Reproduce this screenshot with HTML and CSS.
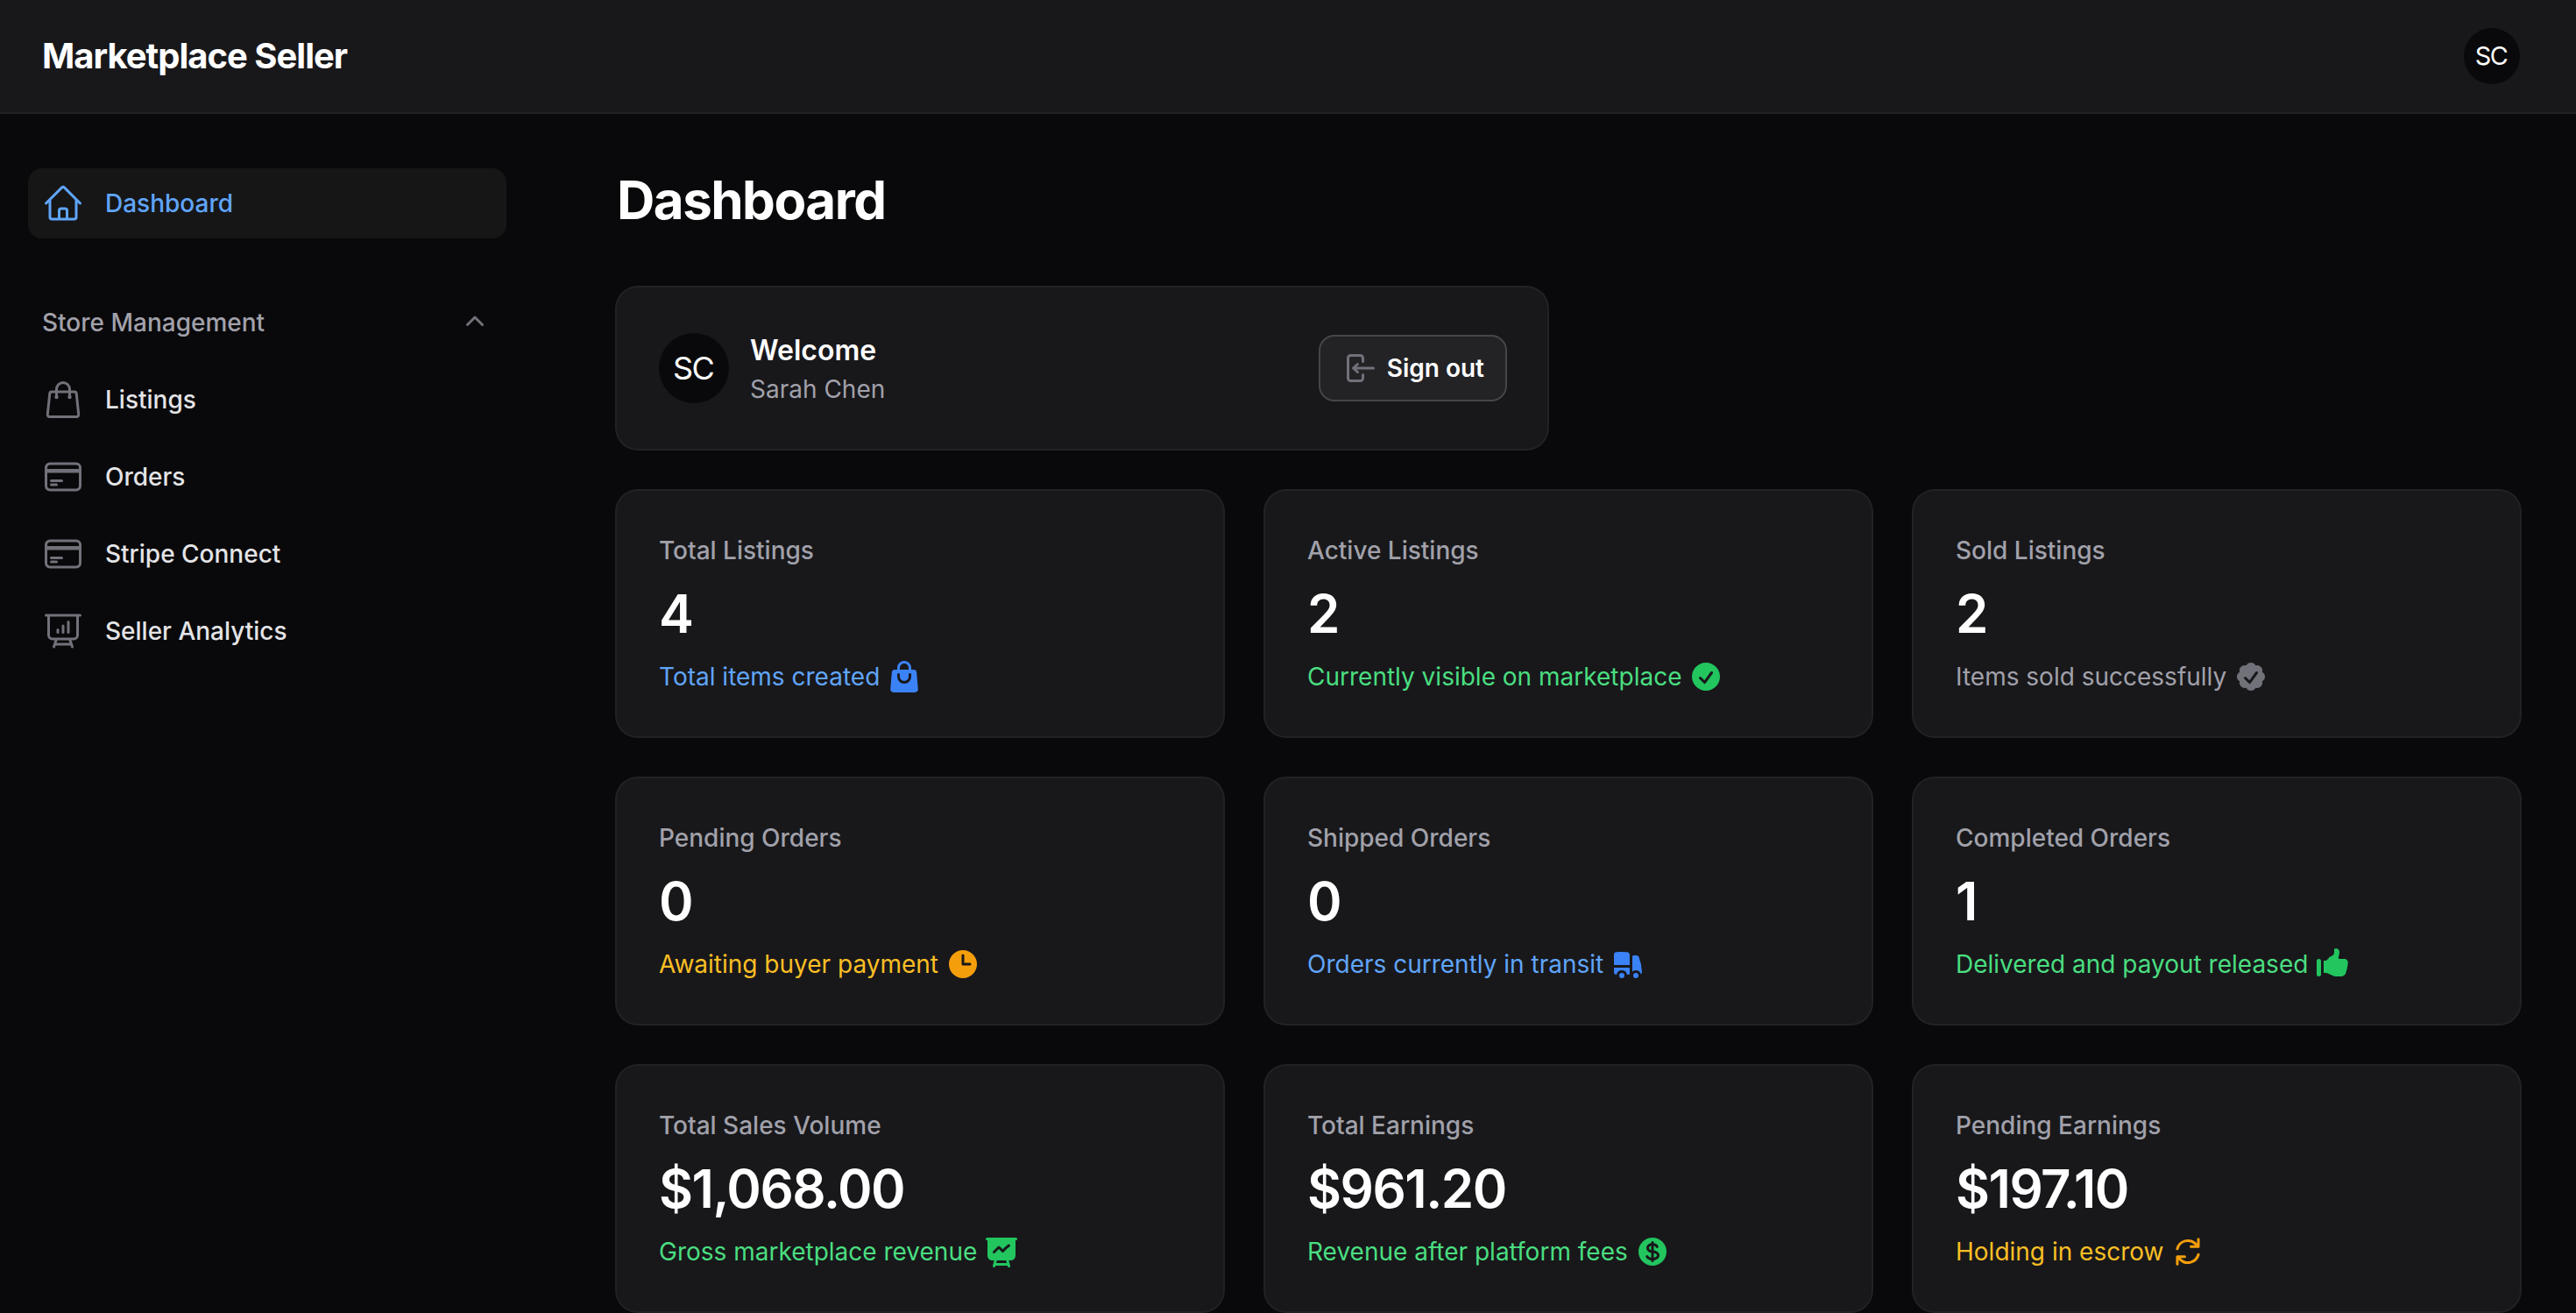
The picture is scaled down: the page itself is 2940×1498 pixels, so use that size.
FILE: index.html
```html
<!DOCTYPE html>
<html lang="en">
<head>
<meta charset="utf-8">
<title>Dashboard - Marketplace Seller</title>
<link rel="stylesheet" href="styles.css">
</head>
<body>
<header class="topbar">
  <a class="brand">Marketplace Seller</a>
  <div class="avatar avatar-sm">SC</div>
</header>
<div class="layout">
  <aside class="sidebar">
    <nav class="nav">
      <a class="nav-item nav-item-active">
        <svg class="nav-icon" viewBox="0 0 24 24"><path d="m2.25 12 8.954-8.955c.44-.439 1.152-.439 1.591 0L21.75 12M4.5 9.75v10.125c0 .621.504 1.125 1.125 1.125H9.75v-4.875c0-.621.504-1.125 1.125-1.125h2.25c.621 0 1.125.504 1.125 1.125V21h4.125c.621 0 1.125-.504 1.125-1.125V9.75M8.25 21h8.25"/></svg>
        <span>Dashboard</span>
      </a>
      <section class="nav-group">
        <div class="group-header">
          <span>Store Management</span>
          <svg class="icon" viewBox="0 0 20 20"><path fill-rule="evenodd" d="M9.47 6.47a.75.75 0 0 1 1.06 0l4.25 4.25a.75.75 0 1 1-1.06 1.06L10 8.06l-3.72 3.72a.75.75 0 0 1-1.06-1.06l4.25-4.25Z"/></svg>
        </div>
        <a class="nav-item">
          <svg class="nav-icon" viewBox="0 0 24 24"><path d="M15.75 10.5V6a3.75 3.75 0 1 0-7.5 0v4.5m11.356-1.993 1.263 12c.07.665-.45 1.243-1.119 1.243H4.25a1.125 1.125 0 0 1-1.12-1.243l1.264-12A1.125 1.125 0 0 1 5.513 7.5h12.974c.576 0 1.059.435 1.119 1.007ZM8.625 10.5a.375.375 0 1 1-.75 0 .375.375 0 0 1 .75 0Zm7.5 0a.375.375 0 1 1-.75 0 .375.375 0 0 1 .75 0Z"/></svg>
          <span>Listings</span>
        </a>
        <a class="nav-item">
          <svg class="nav-icon" viewBox="0 0 24 24"><path d="M2.25 8.25h19.5M2.25 9h19.5m-16.5 5.25h6m-6 2.25h3m-3.75 3h15a2.25 2.25 0 0 0 2.25-2.25V6.75A2.25 2.25 0 0 0 19.5 4.5h-15a2.25 2.25 0 0 0-2.25 2.25v10.5A2.25 2.25 0 0 0 4.5 19.5Z"/></svg>
          <span>Orders</span>
        </a>
        <a class="nav-item">
          <svg class="nav-icon" viewBox="0 0 24 24"><path d="M2.25 8.25h19.5M2.25 9h19.5m-16.5 5.25h6m-6 2.25h3m-3.75 3h15a2.25 2.25 0 0 0 2.25-2.25V6.75A2.25 2.25 0 0 0 19.5 4.5h-15a2.25 2.25 0 0 0-2.25 2.25v10.5A2.25 2.25 0 0 0 4.5 19.5Z"/></svg>
          <span>Stripe Connect</span>
        </a>
        <a class="nav-item">
          <svg class="nav-icon" viewBox="0 0 24 24"><path d="M3.75 3v11.25A2.25 2.25 0 0 0 6 16.5h2.25M3.75 3h-1.5m1.5 0h16.5m0 0h1.5m-1.5 0v11.25A2.25 2.25 0 0 1 18 16.5h-2.25m-7.5 0h7.5m-7.5 0-1 3m8.5-3 1 3m0 0 .5 1.5m-.5-1.5h-9.5m0 0-.5 1.5M9 11.25v1.5M12 9v3.75m3-6v6"/></svg>
          <span>Seller Analytics</span>
        </a>
      </section>
    </nav>
  </aside>
  <main class="main">
    <h1 class="heading">Dashboard</h1>
    <div class="widgets">
      <section class="card account">
        <div class="avatar avatar-lg">SC</div>
        <div class="account-text">
          <h2 class="account-title">Welcome</h2>
          <p class="account-name">Sarah Chen</p>
        </div>
        <button class="button" type="button">
          <svg class="icon" viewBox="0 0 20 20"><path fill-rule="evenodd" d="M3 4.25A2.25 2.25 0 0 1 5.25 2h5.5A2.25 2.25 0 0 1 13 4.25v2a.75.75 0 0 1-1.5 0v-2a.75.75 0 0 0-.75-.75h-5.5a.75.75 0 0 0-.75.75v11.5c0 .414.336.75.75.75h5.5a.75.75 0 0 0 .75-.75v-2a.75.75 0 0 1 1.5 0v2A2.25 2.25 0 0 1 10.75 18h-5.5A2.25 2.25 0 0 1 3 15.75V4.25Z"/><path fill-rule="evenodd" d="M19 10a.75.75 0 0 0-.75-.75H8.704l1.048-.943a.75.75 0 1 0-1.004-1.114l-2.5 2.25a.75.75 0 0 0 0 1.114l2.5 2.25a.75.75 0 1 0 1.004-1.114l-1.048-.943h9.546A.75.75 0 0 0 19 10Z"/></svg>
          <span>Sign out</span>
        </button>
      </section>
      <div class="stats">
        <div class="card stat">
          <div class="stat-label">Total Listings</div>
          <div class="stat-value">4</div>
          <div class="stat-desc info"><span>Total items created</span><svg class="icon" viewBox="0 0 20 20"><path fill-rule="evenodd" d="M6 5v1H4.667a1.75 1.75 0 0 0-1.743 1.598l-.826 9.5A1.75 1.75 0 0 0 3.84 19H16.16a1.75 1.75 0 0 0 1.743-1.902l-.826-9.5A1.75 1.75 0 0 0 15.333 6H14V5a4 4 0 0 0-8 0Zm4-2.5A2.5 2.5 0 0 0 7.5 5v1h5V5A2.5 2.5 0 0 0 10 2.5ZM7.5 10a2.5 2.5 0 0 0 5 0V8.75a.75.75 0 0 1 1.5 0V10a4 4 0 0 1-8 0V8.75a.75.75 0 0 1 1.5 0V10Z"/></svg></div>
        </div>
        <div class="card stat">
          <div class="stat-label">Active Listings</div>
          <div class="stat-value">2</div>
          <div class="stat-desc success"><span>Currently visible on marketplace</span><svg class="icon" viewBox="0 0 20 20"><path fill-rule="evenodd" d="M10 18a8 8 0 1 0 0-16 8 8 0 0 0 0 16Zm3.857-9.809a.75.75 0 0 0-1.214-.882l-3.483 4.79-1.88-1.88a.75.75 0 1 0-1.06 1.061l2.5 2.5a.75.75 0 0 0 1.137-.089l4-5.5Z"/></svg></div>
        </div>
        <div class="card stat">
          <div class="stat-label">Sold Listings</div>
          <div class="stat-value">2</div>
          <div class="stat-desc neutral"><span>Items sold successfully</span><svg class="icon" viewBox="0 0 20 20"><path fill-rule="evenodd" d="M16.403 12.652a3 3 0 0 0 0-5.304 3 3 0 0 0-3.75-3.751 3 3 0 0 0-5.305 0 3 3 0 0 0-3.751 3.75 3 3 0 0 0 0 5.305 3 3 0 0 0 3.75 3.751 3 3 0 0 0 5.305 0 3 3 0 0 0 3.751-3.75Zm-2.546-4.46a.75.75 0 0 0-1.214-.883l-3.483 4.79-1.88-1.88a.75.75 0 1 0-1.06 1.061l2.5 2.5a.75.75 0 0 0 1.137-.089l4-5.5Z"/></svg></div>
        </div>
        <div class="card stat">
          <div class="stat-label">Pending Orders</div>
          <div class="stat-value">0</div>
          <div class="stat-desc warning"><span>Awaiting buyer payment</span><svg class="icon" viewBox="0 0 20 20"><path fill-rule="evenodd" d="M10 18a8 8 0 1 0 0-16 8 8 0 0 0 0 16Zm.75-13a.75.75 0 0 0-1.5 0v5c0 .414.336.75.75.75h4a.75.75 0 0 0 0-1.5h-3.25V5Z"/></svg></div>
        </div>
        <div class="card stat">
          <div class="stat-label">Shipped Orders</div>
          <div class="stat-value">0</div>
          <div class="stat-desc info"><span>Orders currently in transit</span><svg class="icon" viewBox="0 0 20 20"><path d="M6.5 3c-1.051 0-2.093.04-3.125.117A1.49 1.49 0 0 0 2 4.607V10.5h9V4.606c0-.771-.59-1.43-1.375-1.489A41.568 41.568 0 0 0 6.5 3ZM2 12v2.5A1.5 1.5 0 0 0 3.5 16h.041a3 3 0 0 1 5.918 0h.791a.75.75 0 0 0 .75-.75V12H2Z"/><path d="M6.5 18a1.5 1.5 0 1 0 0-3 1.5 1.5 0 0 0 0 3ZM13.25 5a.75.75 0 0 0-.75.75v8.514a3.001 3.001 0 0 1 4.893 1.44c.37-.275.61-.719.595-1.227a24.905 24.905 0 0 0-1.784-8.549A1.486 1.486 0 0 0 14.823 5H13.25ZM14.5 18a1.5 1.5 0 1 0 0-3 1.5 1.5 0 0 0 0 3Z"/></svg></div>
        </div>
        <div class="card stat">
          <div class="stat-label">Completed Orders</div>
          <div class="stat-value">1</div>
          <div class="stat-desc success"><span>Delivered and payout released</span><svg class="icon" viewBox="0 0 20 20"><path d="M1 8.25a1.25 1.25 0 1 1 2.5 0v7.5a1.25 1.25 0 1 1-2.5 0v-7.5ZM11 3V1.7c0-.268.14-.526.395-.607A2 2 0 0 1 14 3c0 .995-.182 1.948-.514 2.826-.204.54.166 1.174.744 1.174h2.52c1.243 0 2.261 1.01 2.146 2.247a23.864 23.864 0 0 1-1.341 5.974C17.153 16.323 16.072 17 14.9 17h-3.192a3 3 0 0 1-1.341-.317l-2.734-1.366A3 3 0 0 0 6.292 15H5V8h.963c.685 0 1.258-.483 1.612-1.068a4.011 4.011 0 0 1 2.166-1.73c.432-.143.853-.386 1.011-.814.16-.432.248-.9.248-1.388Z"/></svg></div>
        </div>
        <div class="card stat">
          <div class="stat-label">Total Sales Volume</div>
          <div class="stat-value">$1,068.00</div>
          <div class="stat-desc success"><span>Gross marketplace revenue</span><svg class="icon" viewBox="0 0 20 20"><path fill-rule="evenodd" d="M1 2.75A.75.75 0 0 1 1.75 2h16.5a.75.75 0 0 1 0 1.5H18v8.75A2.75 2.75 0 0 1 15.25 15h-1.072l.798 3.06a.75.75 0 0 1-1.452.38L13.41 18H6.59l-.114.44a.75.75 0 0 1-1.452-.38L5.823 15H4.75A2.75 2.75 0 0 1 2 12.25V3.5h-.25A.75.75 0 0 1 1 2.75ZM7.373 15l-.391 1.5h6.037l-.392-1.5H7.373Zm7.49-8.931a.75.75 0 0 1-.175 1.046 19.326 19.326 0 0 0-3.398 3.098.75.75 0 0 1-1.097.04L8.5 8.561l-2.22 2.22A.75.75 0 1 1 5.22 9.72l2.75-2.75a.75.75 0 0 1 1.06 0l1.664 1.663a20.786 20.786 0 0 1 3.122-2.74.75.75 0 0 1 1.046.176Z"/></svg></div>
        </div>
        <div class="card stat">
          <div class="stat-label">Total Earnings</div>
          <div class="stat-value">$961.20</div>
          <div class="stat-desc success"><span>Revenue after platform fees</span><svg class="icon" viewBox="0 0 20 20"><path d="M10.75 10.818v2.614A3.13 3.13 0 0 0 11.888 13c.482-.315.612-.648.612-.875 0-.227-.13-.56-.612-.875a3.13 3.13 0 0 0-1.138-.432ZM8.33 8.62c.053.055.115.11.184.164.208.16.46.284.736.363V6.603a2.45 2.45 0 0 0-.35.13c-.14.065-.27.143-.386.233-.377.292-.514.627-.514.909 0 .184.058.39.202.592.037.051.08.102.128.152Z"/><path fill-rule="evenodd" d="M18 10a8 8 0 1 1-16 0 8 8 0 0 1 16 0Zm-8-6a.75.75 0 0 1 .75.75v.316a3.78 3.78 0 0 1 1.653.713c.426.33.744.74.925 1.2a.75.75 0 0 1-1.395.55 1.35 1.35 0 0 0-.447-.563 2.187 2.187 0 0 0-.736-.363V9.3c.698.093 1.383.32 1.959.696.787.514 1.29 1.27 1.29 2.13 0 .86-.504 1.616-1.29 2.13-.576.377-1.261.603-1.96.696v.299a.75.75 0 1 1-1.5 0v-.3c-.697-.092-1.382-.318-1.958-.695-.482-.315-.857-.717-1.078-1.188a.75.75 0 1 1 1.359-.636c.08.173.245.376.54.569.313.205.706.353 1.138.432v-2.748a3.782 3.782 0 0 1-1.653-.713C6.9 9.433 6.5 8.681 6.5 7.875c0-.805.4-1.558 1.097-2.096a3.78 3.78 0 0 1 1.653-.713V4.75A.75.75 0 0 1 10 4Z"/></svg></div>
        </div>
        <div class="card stat">
          <div class="stat-label">Pending Earnings</div>
          <div class="stat-value">$197.10</div>
          <div class="stat-desc warning"><span>Holding in escrow</span><svg class="icon" viewBox="0 0 20 20"><path fill-rule="evenodd" d="M15.312 11.424a5.5 5.5 0 0 1-9.201 2.466l-.312-.311h2.433a.75.75 0 0 0 0-1.5H3.989a.75.75 0 0 0-.75.75v4.242a.75.75 0 0 0 1.5 0v-2.43l.31.31a7 7 0 0 0 11.712-3.138.75.75 0 0 0-1.449-.39Zm1.23-3.723a.75.75 0 0 0 .219-.53V2.929a.75.75 0 0 0-1.5 0V5.36l-.31-.31A7 7 0 0 0 3.239 8.188a.75.75 0 1 0 1.448.389A5.5 5.5 0 0 1 13.89 6.11l.311.31h-2.432a.75.75 0 0 0 0 1.5h4.243a.75.75 0 0 0 .53-.219Z"/></svg></div>
        </div>
      </div>
    </div>
  </main>
</div>
</body>
</html>
```
FILE: styles.css
```css
*,
*::before,
*::after {
  box-sizing: border-box;
}

html {
  overflow: hidden;
}

body {
  margin: 0;
  height: 1498px;
  overflow: hidden;
  background: #09090b;
  color: #fff;
  font-family: Inter, "Liberation Sans", sans-serif;
  font-size: 28px;
  line-height: 40px;
  -webkit-font-smoothing: antialiased;
}

h1,
h2,
p {
  margin: 0;
}

.topbar {
  display: flex;
  align-items: center;
  justify-content: space-between;
  height: 128px;
  padding: 0 64px 0 48px;
  background: #18181b;
  box-shadow: 0 0 0 2px rgba(255, 255, 255, 0.1);
}

.brand {
  font-size: 40px;
  font-weight: 700;
  line-height: 40px;
  letter-spacing: -0.025em;
}

.avatar {
  display: flex;
  flex: none;
  align-items: center;
  justify-content: center;
  padding-right: 2px;
  border-radius: 50%;
  background: #09090b;
  font-weight: 400;
  letter-spacing: -0.05em;
}

.avatar-sm {
  width: 64px;
  height: 64px;
  font-size: 28.8px;
}

.avatar-lg {
  width: 80px;
  height: 80px;
  font-size: 36px;
}

.layout {
  display: flex;
}

.sidebar {
  flex: none;
  width: 640px;
  padding: 64px 62px 64px 32px;
}

.nav {
  display: flex;
  flex-direction: column;
  gap: 56px;
}

.nav-group {
  display: flex;
  flex-direction: column;
  gap: 8px;
}

.group-header {
  display: flex;
  align-items: center;
  justify-content: space-between;
  height: 80px;
  padding: 0 16px;
  color: #a1a1aa;
  font-weight: 500;
}

.group-header .icon {
  color: #71717a;
}

.nav-item {
  display: flex;
  align-items: center;
  gap: 24px;
  height: 80px;
  padding: 16px;
  border-radius: 16px;
  color: #e4e4e7;
  font-weight: 500;
}

.nav-icon {
  width: 48px;
  height: 48px;
  fill: none;
  stroke: #71717a;
  stroke-width: 1.5;
  stroke-linecap: round;
  stroke-linejoin: round;
}

.nav-item-active {
  background: #161617;
  color: #60a5fa;
}

.nav-item-active .nav-icon {
  stroke: #60a5fa;
}

.icon {
  display: block;
  flex: none;
  width: 40px;
  height: 40px;
  fill: currentColor;
}

.main {
  flex: 1;
  padding: 64px 64px 0;
}

.heading {
  margin-bottom: 64px;
  font-size: 60px;
  font-weight: 700;
  line-height: 72px;
  letter-spacing: -0.025em;
}

.widgets {
  display: flex;
  flex-direction: column;
  gap: 48px;
}

.card {
  padding: 48px;
  border-radius: 24px;
  background: #18181b;
  box-shadow: 0 0 0 2px rgba(255, 255, 255, 0.1);
}

.account {
  display: flex;
  align-items: center;
  gap: 24px;
  width: calc((100% - 48px) / 2);
}

.account-text {
  flex: 1;
}

.account-title {
  font-size: 32px;
  font-weight: 600;
  line-height: 48px;
}

.account-name {
  color: #a1a1aa;
}

.button {
  display: flex;
  align-items: center;
  gap: 12px;
  height: 72px;
  padding: 0 24px;
  border: 0;
  border-radius: 16px;
  background: rgba(255, 255, 255, 0.05);
  box-shadow: 0 0 0 2px rgba(255, 255, 255, 0.2);
  color: #fff;
  font: inherit;
  font-weight: 600;
}

.button .icon {
  color: #71717a;
}

.stats {
  display: grid;
  grid-template-columns: repeat(3, 1fr);
  gap: 48px;
}

.stat {
  display: flex;
  flex-direction: column;
  gap: 16px;
}

.stat-label {
  color: #a1a1aa;
  font-weight: 500;
}

.stat-value {
  font-size: 60px;
  font-weight: 600;
  line-height: 72px;
  letter-spacing: -0.025em;
}

.stat-desc {
  display: flex;
  align-items: center;
  gap: 8px;
}

.info {
  color: #60a5fa;
}

.info .icon {
  color: #3b82f6;
}

.success {
  color: #4ade80;
}

.success .icon {
  color: #22c55e;
}

.warning {
  color: #fbbf24;
}

.warning .icon {
  color: #f59e0b;
}

.neutral {
  color: #a1a1aa;
}

.neutral .icon {
  color: #71717a;
}
```
